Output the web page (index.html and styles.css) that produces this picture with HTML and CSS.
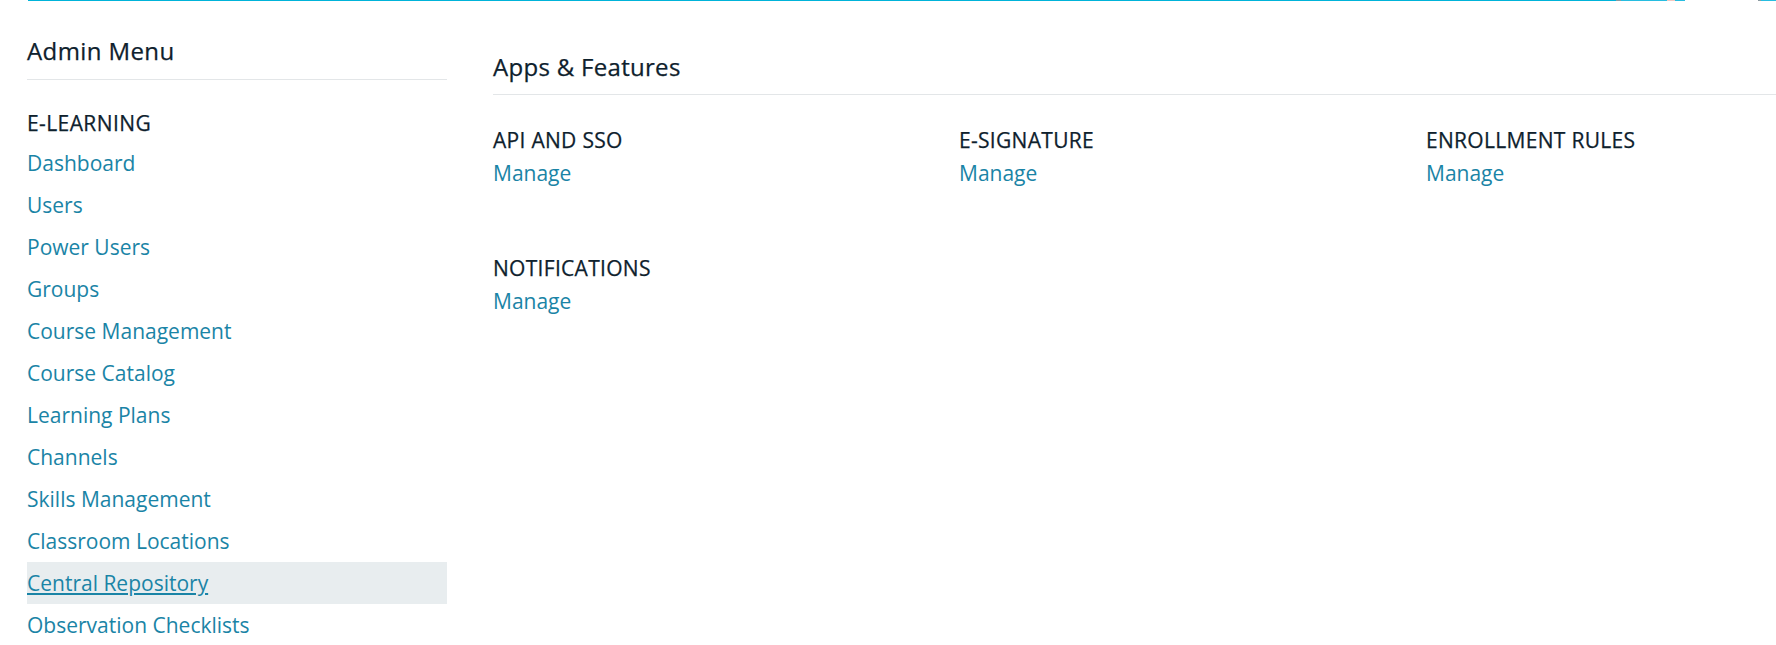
FILE: index.html
```html
<!DOCTYPE html>
<html>
<head>
  <title>Admin Menu - Apps &amp; Features</title>
  <link rel="stylesheet" href="styles.css">
</head>
<body>
  <div class="top-bar"></div>

  <div class="page">
    <!-- Left admin menu -->
    <div class="sidebar">
      <h2 class="sidebar-title">Admin Menu</h2>
      <h3 class="menu-heading">E-LEARNING</h3>
      <ul class="menu-list">
        <li><a href="#">Dashboard</a></li>
        <li><a href="#">Users</a></li>
        <li><a href="#">Power Users</a></li>
        <li><a href="#">Groups</a></li>
        <li><a href="#">Course Management</a></li>
        <li><a href="#">Course Catalog</a></li>
        <li><a href="#">Learning Plans</a></li>
        <li><a href="#">Channels</a></li>
        <li><a href="#">Skills Management</a></li>
        <li><a href="#">Classroom Locations</a></li>
        <li class="active"><a href="#">Central Repository</a></li>
        <li><a href="#">Observation Checklists</a></li>
      </ul>
    </div>

    <!-- Main content -->
    <div class="content">
      <h2 class="content-title">Apps &amp; Features</h2>
      <div class="app-grid">
        <div class="app-card">
          <h4>API AND SSO</h4>
          <a href="#">Manage</a>
        </div>
        <div class="app-card">
          <h4>E-SIGNATURE</h4>
          <a href="#">Manage</a>
        </div>
        <div class="app-card">
          <h4>ENROLLMENT RULES</h4>
          <a href="#">Manage</a>
        </div>
        <div class="app-card">
          <h4>NOTIFICATIONS</h4>
          <a href="#">Manage</a>
        </div>
      </div>
    </div>
  </div>
</body>
</html>
```

FILE: styles.css
```css
/* Base */
body {
  font-family: "Open Sans", "Liberation Sans", sans-serif;
  background-color: #fff;
  color: #0e212d;
  margin: 0;
  padding: 0;
  overflow: hidden;
}

h2, h3, h4 {
  margin: 0;
  font-weight: 400;
  -webkit-text-stroke: 0.25px #0e212d;
}

a {
  color: #1a84a6;
  text-decoration: none;
}

/* Thin header strip left over at the top */
.top-bar {
  height: 1px;
  margin-left: 28px;
  background: linear-gradient(to right,
    #00b3d9 0, #00b3d9 1588px,
    #8a9aa0 1588px, #8a9aa0 1593px,
    #27bde0 1593px, #27bde0 1639px,
    #f4c8c0 1639px, #f4c8c0 1647px,
    #27bde0 1647px, #27bde0 1657px,
    #fff 1657px, #fff 1730px,
    #8a9aa0 1730px, #8a9aa0 1733px,
    #27bde0 1733px);
}

.page {
  display: flex;
  padding-left: 27px;
}

/* Sidebar */
.sidebar {
  width: 420px;
  flex-shrink: 0;
}

.sidebar-title {
  font-size: 24px;
  line-height: 32px;
  letter-spacing: 0.4px;
  padding: 34px 0 12px;
  border-bottom: 1px solid #e3e6e8;
}

.menu-heading {
  font-size: 21px;
  line-height: 36px;
  letter-spacing: 0.4px;
  margin: 25px 0 1px;
}

.menu-list {
  list-style: none;
  margin: 0;
  padding: 0;
}

.menu-list li {
  font-size: 21px;
  line-height: 42px;
}

.menu-list li.active {
  background-color: #e8edef;
}

.menu-list li.active a {
  text-decoration: underline;
}

/* Content */
.content {
  flex: 1;
  min-width: 0;
  margin-left: 46px;
}

.content-title {
  font-size: 24px;
  line-height: 32px;
  letter-spacing: 0.3px;
  padding: 50px 0 11px;
  border-bottom: 1px solid #e3e6e8;
}

.app-grid {
  display: grid;
  grid-template-columns: 466px 467px 467px;
  row-gap: 62px;
  padding-top: 29px;
}

.app-card h4 {
  font-size: 21px;
  line-height: 32px;
  letter-spacing: 0.3px;
}

.app-card a {
  display: block;
  font-size: 21px;
  line-height: 34px;
}
```
